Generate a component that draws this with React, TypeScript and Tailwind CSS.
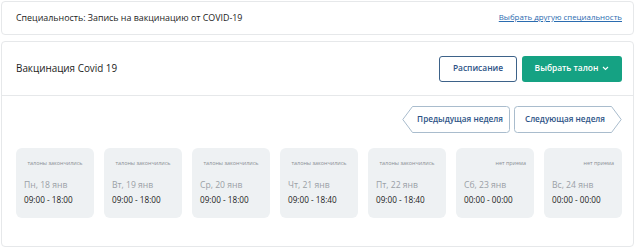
import React from "react";

const days = [
  { note: "талоны закончились", center: true, date: "Пн, 18 янв", time: "09:00 - 18:00" },
  { note: "талоны закончились", center: true, date: "Вт, 19 янв", time: "09:00 - 18:00" },
  { note: "талоны закончились", center: true, date: "Ср, 20 янв", time: "09:00 - 18:00" },
  { note: "талоны закончились", center: true, date: "Чт, 21 янв", time: "09:00 - 18:40" },
  { note: "талоны закончились", center: true, date: "Пт, 22 янв", time: "09:00 - 18:40" },
  { note: "нет приема", center: false, date: "Сб, 23 янв", time: "00:00 - 00:00" },
  { note: "нет приема", center: false, date: "Вс, 24 янв", time: "00:00 - 00:00" },
];

function WeekButton({ label, dir }: { label: string; dir: "left" | "right" }) {
  return (
    <div className="relative w-[108px] h-[27px]">
      <svg className="absolute inset-0" width="108" height="27" viewBox="0 0 108 27">
        {dir === "left" ? (
          <path
            d="M10.5 0.5 H104.5 Q107.5 0.5 107.5 3.5 V23.5 Q107.5 26.5 104.5 26.5 H10.5 L0.8 13.5 Z"
            fill="white"
            stroke="#a9bccd"
            strokeWidth="1"
          />
        ) : (
          <path
            d="M3.5 0.5 H97.5 L107.2 13.5 L97.5 26.5 H3.5 Q0.5 26.5 0.5 23.5 V3.5 Q0.5 0.5 3.5 0.5 Z"
            fill="white"
            stroke="#a9bccd"
            strokeWidth="1"
          />
        )}
      </svg>
      <div className={`relative flex h-full items-center justify-center text-[8.2px] font-semibold text-[#2d5386] ${dir === "left" ? "pl-[8px]" : "pr-[6px]"}`}>
        {label}
      </div>
    </div>
  );
}

export default function App() {
  return (
    <div className="w-[640px] h-[248px] bg-white p-[1px] pr-[6px] flex flex-col gap-[6px]" style={{ fontFamily: '"Open Sans", "Noto Sans", sans-serif' }}>
      <div className="h-[34px] rounded-[4px] border border-[#e6e8ea] flex items-center justify-between pl-[14px] pr-[11px]">
        <span className="text-[8.9px] text-[#222]">Специальность: Запись на вакцинацию от COVID-19</span>
        <span className="text-[7.9px] text-[#2b6cb0] underline">Выбрать другую специальность</span>
      </div>
      <div className="flex-1 rounded-[4px] border border-[#e6e8ea] flex flex-col">
        <div className="h-[54px] border-b border-[#e6e8ea] flex items-center justify-between pl-[14px] pr-[11px]">
          <span className="text-[9.9px] text-[#222]">Вакцинация Covid 19</span>
          <div className="flex gap-[5px]">
            <div className="w-[78px] h-[26px] rounded-[3px] border border-[#3d6289] flex items-center justify-center text-[8.4px] font-semibold text-[#2d5386]">
              Расписание
            </div>
            <div className="w-[100px] h-[26px] rounded-[3px] bg-[#15a283] flex items-center justify-center gap-[4px] text-[8.4px] font-semibold text-white">
              Выбрать талон
              <svg width="7" height="5" viewBox="0 0 7 5">
                <path d="M1 1 L3.5 3.5 L6 1" fill="none" stroke="white" strokeWidth="1.1" />
              </svg>
            </div>
          </div>
        </div>
        <div className="flex flex-col pl-[14px] pr-[11px] pt-[10px]">
          <div className="flex justify-end gap-[4px]">
            <WeekButton label="Предыдущая неделя" dir="left" />
            <WeekButton label="Следующая неделя" dir="right" />
          </div>
          <div className="flex gap-[10px] mt-[15px]">
            {days.map((d) => (
              <div key={d.date} className="w-[78px] h-[70px] rounded-[6px] bg-[#eef1f3] flex flex-col px-[8px] pt-[11px]">
                <div className={`text-[5.4px] leading-[8px] text-[#8a8f94] ${d.center ? "text-center" : "text-right"}`}>{d.note}</div>
                <div className="mt-[12px] text-[8.6px] leading-[13px] text-[#9aa0a6]">{d.date}</div>
                <div className="mt-[1px] text-[8.2px] leading-[13px] text-[#222]">{d.time}</div>
              </div>
            ))}
          </div>
        </div>
      </div>
    </div>
  );
}
